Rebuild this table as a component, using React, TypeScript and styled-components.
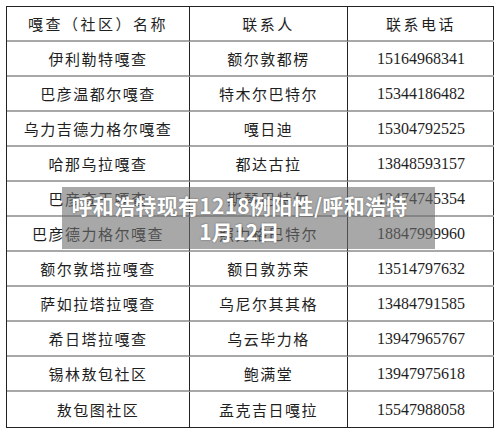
import React from 'react';
import styled, { createGlobalStyle } from 'styled-components';

const GlobalStyle = createGlobalStyle`
  html, body {
    margin: 0;
    padding: 0;
    background: #fff;
  }
`;

const Page = styled.div`
  position: relative;
  width: 500px;
  height: 436px;
  padding: 6px 0 0 6px;
  box-sizing: border-box;
`;

const Table = styled.div`
  display: grid;
  grid-template-columns: 183px 158px 146px;
  width: 488px;
  border: 1px solid #222;
  box-sizing: border-box;
`;

const Cell = styled.div<{ $last?: boolean; $bottom?: boolean }>`
  height: 35px;
  display: flex;
  align-items: center;
  justify-content: center;
  box-sizing: border-box;
  border-right: ${({ $last }) => ($last ? 'none' : '1px solid #222')};
  border-bottom: ${({ $bottom }) => ($bottom ? 'none' : '2px solid #a8a8a8')};
  color: #1e1e1e;
  font-family: 'Noto Sans CJK SC', sans-serif;
  font-size: 15px;
  letter-spacing: 1.5px;
`;

const HeadCell = styled(Cell)`
  letter-spacing: 2.5px;
`;

const Phone = styled(Cell)`
  font-family: 'Liberation Serif', serif;
  font-size: 16px;
  letter-spacing: 0;
`;

const Banner = styled.div`
  position: absolute;
  left: 62px;
  top: 187px;
  width: 373px;
  height: 62px;
  padding-right: 18px;
  box-sizing: border-box;
  display: flex;
  flex-direction: column;
  align-items: center;
  justify-content: center;
  background: rgba(110, 110, 110, 0.6);
  color: #fff;
  font-family: 'Noto Sans CJK SC', sans-serif;
  font-weight: 700;
  font-size: 21px;
  line-height: 26px;
  letter-spacing: 0.3px;
  white-space: nowrap;
  text-shadow: 0 0 2px rgba(0, 0, 0, 0.45);
`;

const rows = [
  ['伊利勒特嘎查', '额尔敦都楞', '15164968341'],
  ['巴彦温都尔嘎查', '特木尔巴特尔', '15344186482'],
  ['乌力吉德力格尔嘎查', '嘎日迪', '15304792525'],
  ['哈那乌拉嘎查', '都达古拉', '13848593157'],
  ['巴彦查干嘎查', '斯琴巴特尔', '13474745354'],
  ['巴彦德力格尔嘎查', '照力格巴特尔', '18847999960'],
  ['额尔敦塔拉嘎查', '额日敦苏荣', '13514797632'],
  ['萨如拉塔拉嘎查', '乌尼尔其其格', '13484791585'],
  ['希日塔拉嘎查', '乌云毕力格', '13947965767'],
  ['锡林敖包社区', '鲍满堂', '13947975618'],
  ['敖包图社区', '孟克吉日嘎拉', '15547988058'],
];

const App: React.FC = () => (
  <Page>
    <GlobalStyle />
    <Table>
      <HeadCell>嘎查（社区）名称</HeadCell>
      <HeadCell>联系人</HeadCell>
      <HeadCell $last>联系电话</HeadCell>
      {rows.map(([name, person, phone], i) => {
        const bottom = i === rows.length - 1;
        return (
          <React.Fragment key={phone}>
            <Cell $bottom={bottom}>{name}</Cell>
            <Cell $bottom={bottom}>{person}</Cell>
            <Phone $last $bottom={bottom}>{phone}</Phone>
          </React.Fragment>
        );
      })}
    </Table>
    <Banner>
      <div>呼和浩特现有1218例阳性/呼和浩特</div>
      <div>1月12日</div>
    </Banner>
  </Page>
);

export default App;
